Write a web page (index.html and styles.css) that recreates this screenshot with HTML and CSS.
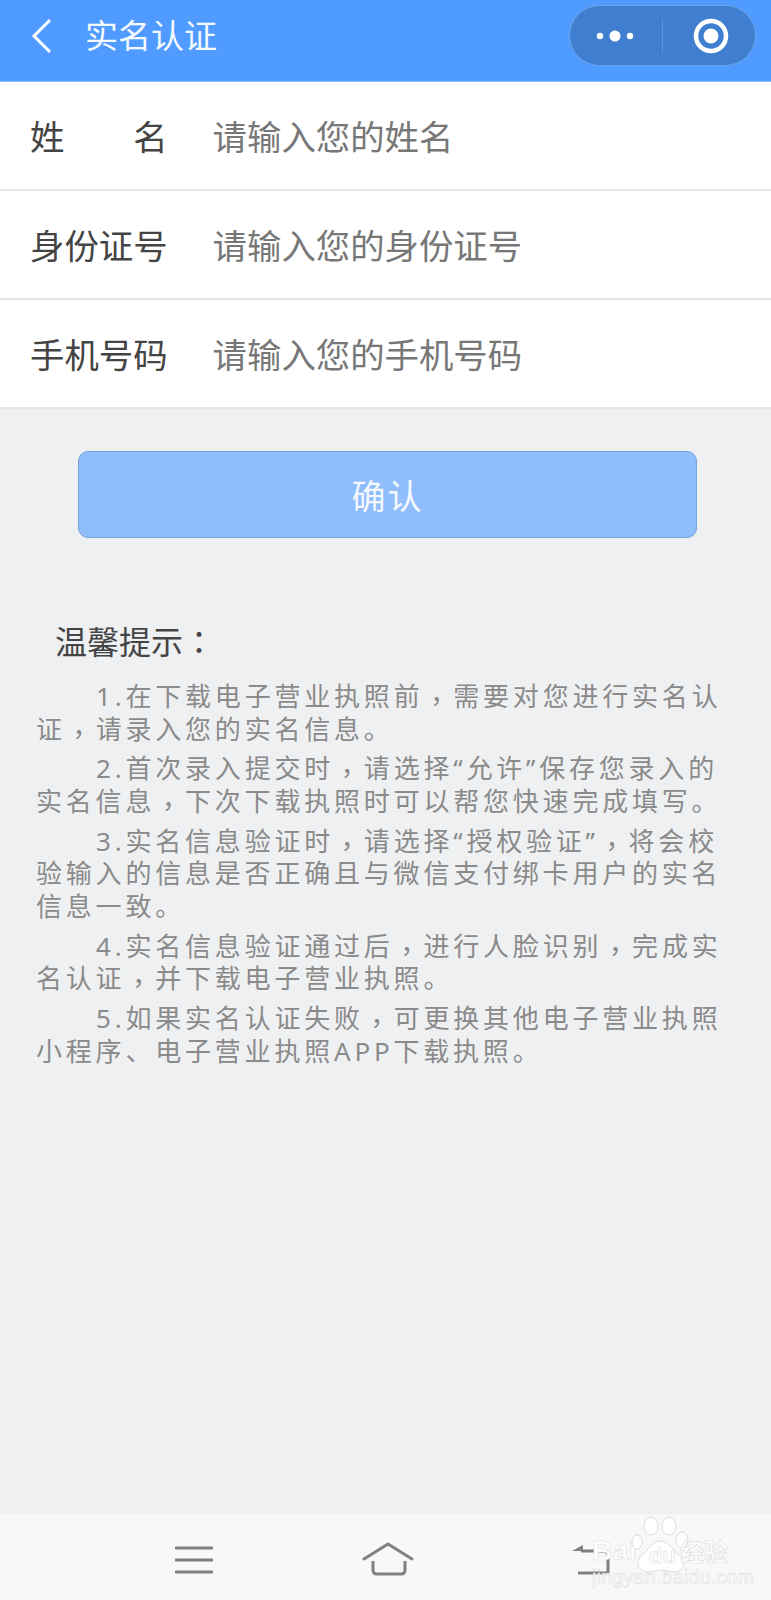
FILE: index.html
```html
<!DOCTYPE html>
<html lang="zh-CN">
<head>
    <meta charset="UTF-8">
    <title>实名认证</title>
    <link rel="stylesheet" href="styles.css">
</head>
<body>
    <div class="page">
        <header class="navbar">
            <svg class="back-icon" width="24" height="36" viewBox="0 0 24 36">
                <path d="M20 2 L4 18 L20 34" fill="none" stroke="#fff" stroke-width="3"/>
            </svg>
            <div class="nav-title">实名认证</div>
            <div class="capsule">
                <svg class="capsule-more" width="92" height="60" viewBox="0 0 92 60">
                    <circle cx="30" cy="30" r="3.2" fill="#fff"/>
                    <circle cx="45" cy="30" r="5.5" fill="#fff"/>
                    <circle cx="60" cy="30" r="3.2" fill="#fff"/>
                </svg>
                <div class="capsule-line"></div>
                <svg class="capsule-close" width="92" height="60" viewBox="0 0 92 60">
                    <circle cx="48" cy="30" r="15" fill="none" stroke="#fff" stroke-width="4.5"/>
                    <circle cx="48" cy="30" r="7.5" fill="#fff"/>
                </svg>
            </div>
        </header>

        <section class="form">
            <div class="row">
                <span class="label">姓名</span>
                <span class="hint">请输入您的姓名</span>
            </div>
            <div class="row">
                <span class="label">身份证号</span>
                <span class="hint">请输入您的身份证号</span>
            </div>
            <div class="row">
                <span class="label">手机号码</span>
                <span class="hint">请输入您的手机号码</span>
            </div>
        </section>

        <div class="confirm">确认</div>

        <section class="tips">
            <h3>温馨提示<span class="pc">：</span></h3>
            <p>1.在下载电子营业执照前<span class="pc">，</span>需要对您进行实名认证<span class="pc">，</span>请录入您的实名信息。</p>
            <p>2.首次录入提交时<span class="pc">，</span>请选择“允许”保存您录入的实名信息<span class="pc">，</span>下次下载执照时可以帮您快速完成填写。</p>
            <p>3.实名信息验证时<span class="pc">，</span>请选择“授权验证”<span class="pc">，</span>将会校验输入的信息是否正确且与微信支付绑卡用户的实名信息一致。</p>
            <p>4.实名信息验证通过后<span class="pc">，</span>进行人脸识别<span class="pc">，</span>完成实名认证<span class="pc">，</span>并下载电子营业执照。</p>
            <p>5.如果实名认证失败<span class="pc">，</span>可更换其他电子营业执照小程序、电子营业执照APP下载执照。</p>
        </section>

        <footer class="softkeys">
            <svg class="softkey-menu" width="38" height="28" viewBox="0 0 38 28">
                <path d="M1 2 H37 M1 14 H37 M1 26 H37" stroke="#808080" stroke-width="3" stroke-linecap="round"/>
            </svg>
            <svg class="softkey-home" width="52" height="34" viewBox="0 0 52 34">
                <path d="M2 17 L26 2 L50 17" fill="none" stroke="#808080" stroke-width="3" stroke-linecap="round" stroke-linejoin="round"/>
                <path d="M11 19 V28 Q11 32 15 32 H39 Q43 32 43 28 V19" fill="none" stroke="#808080" stroke-width="3"/>
            </svg>
            <svg class="softkey-back" width="40" height="32" viewBox="0 0 40 32">
                <path d="M1 8 L12 2 V8 Z" fill="#808080"/>
                <path d="M10 8 H32 Q37 8 37 13 V30 H7" fill="none" stroke="#808080" stroke-width="3"/>
            </svg>
        </footer>

        <div class="watermark">
            <span class="wm-bai">Bai</span>
            <svg class="wm-paw" width="60" height="62" viewBox="0 0 60 62">
                <g fill="#fff" stroke="#dcdcdc" stroke-width="1">
                    <ellipse cx="6" cy="26" rx="5" ry="7"/>
                    <ellipse cx="20" cy="10" rx="7" ry="9"/>
                    <ellipse cx="38" cy="10" rx="7" ry="9"/>
                    <ellipse cx="51" cy="24" rx="6" ry="8"/>
                    <path d="M29 25 C20 25 18 34 12 38 C4 44 6 56 17 56 C23 56 25 54 30 54 C35 54 38 56 43 56 C54 56 56 44 47 38 C40 33 38 25 29 25 Z"/>
                </g>
            </svg>
            <span class="wm-du">du</span>
            <span class="wm-jy">经验</span>
            <span class="wm-url">jingyan.baidu.com</span>
        </div>
    </div>
</body>
</html>
```

FILE: styles.css
```css
* { box-sizing: border-box; }
html, body { margin: 0; padding: 0; }
body {
    font-family: "Noto Sans", "Noto Sans CJK SC", sans-serif;
    background: #eff0f2;
}
.page {
    position: relative;
    width: 771px;
    height: 1600px;
    display: flex;
    flex-direction: column;
    overflow: hidden;
    background: #eff0f2;
}

.navbar {
    height: 82px;
    flex: none;
    display: flex;
    align-items: center;
    padding: 0 15px 10px 30px;
    background: #4f9bff;
    border-bottom: 1px solid #8cbdf5;
}
.back-icon { flex: none; }
.nav-title {
    margin-left: 31px;
    color: #f4f8ff;
    font-size: 33px;
    line-height: 44px;
}
.capsule {
    margin-left: auto;
    width: 187px;
    height: 61px;
    display: flex;
    align-items: center;
    border: 1px solid #6ea5ea;
    border-radius: 31px;
    background: #407fd0;
}
.capsule-line { width: 1px; height: 36px; background: #5c93dc; }

.form { flex: none; background: #fff; }
.row {
    height: 109px;
    display: flex;
    align-items: center;
    padding: 0 0 2px 30px;
    border-bottom: 2px solid #e5e5e5;
    font-size: 34.4px;
    white-space: nowrap;
}
.label {
    flex: none;
    width: 137.6px;
    color: #444;
    text-align-last: justify;
}
.hint { margin-left: 45px; color: #777; }

.confirm {
    flex: none;
    width: 619px;
    height: 87px;
    margin: 42px 0 0 78px;
    display: flex;
    align-items: center;
    justify-content: center;
    background: #90bdfb;
    border: 1px solid #76a3dc;
    border-radius: 10px;
    color: #f4f8ff;
    font-size: 34px;
    letter-spacing: 2px;
}

/* centred punctuation, as on the device font */
.pc {
    font-family: "Noto Sans CJK TC", sans-serif;
    font-feature-settings: "locl" 0;
}

.tips { flex: none; padding: 0 39px 0 36px; }
.tips h3 {
    margin: 80px 0 16px 19px;
    color: #444;
    font-size: 32px;
    font-weight: 400;
    line-height: 44px;
}
.tips p {
    margin: 0 0 7.2px;
    color: #8a8a8a;
    font-size: 26px;
    letter-spacing: 3.8px;
    line-height: 32.6px;
    text-indent: 60px;
}
.tips p .pc { line-height: 0; vertical-align: -5px; }

.softkeys {
    position: absolute;
    left: 0;
    right: 0;
    top: 1514px;
    height: 86px;
    background: #f8f8f8;
}
.softkeys svg { position: absolute; }
.softkey-menu { left: 175px; top: 32px; }
.softkey-home { left: 362px; top: 28px; }
.softkey-back { left: 571px; top: 29px; }

.watermark {
    position: absolute;
    left: 590px;
    top: 1514px;
    width: 150px;
    height: 86px;
    color: #fff;
    -webkit-text-stroke: 0.6px #dcdcdc;
    font-family: "Liberation Sans", sans-serif;
}
.watermark span, .watermark svg { position: absolute; }
.wm-bai { left: 2px; top: 21px; font-size: 28px; line-height: 32px; font-weight: 700; letter-spacing: 0.5px; }
.wm-paw { left: 41px; top: 2px; }
.wm-du { left: 59px; top: 30px; font-size: 22px; line-height: 24px; font-weight: 700; }
.wm-jy { left: 90px; top: 22px; font-family: "Noto Sans CJK SC", sans-serif; font-size: 24px; line-height: 30px; font-weight: 700; }
.wm-url { left: 2px; top: 52px; font-size: 19.5px; line-height: 22px; letter-spacing: 0.3px; }
```
